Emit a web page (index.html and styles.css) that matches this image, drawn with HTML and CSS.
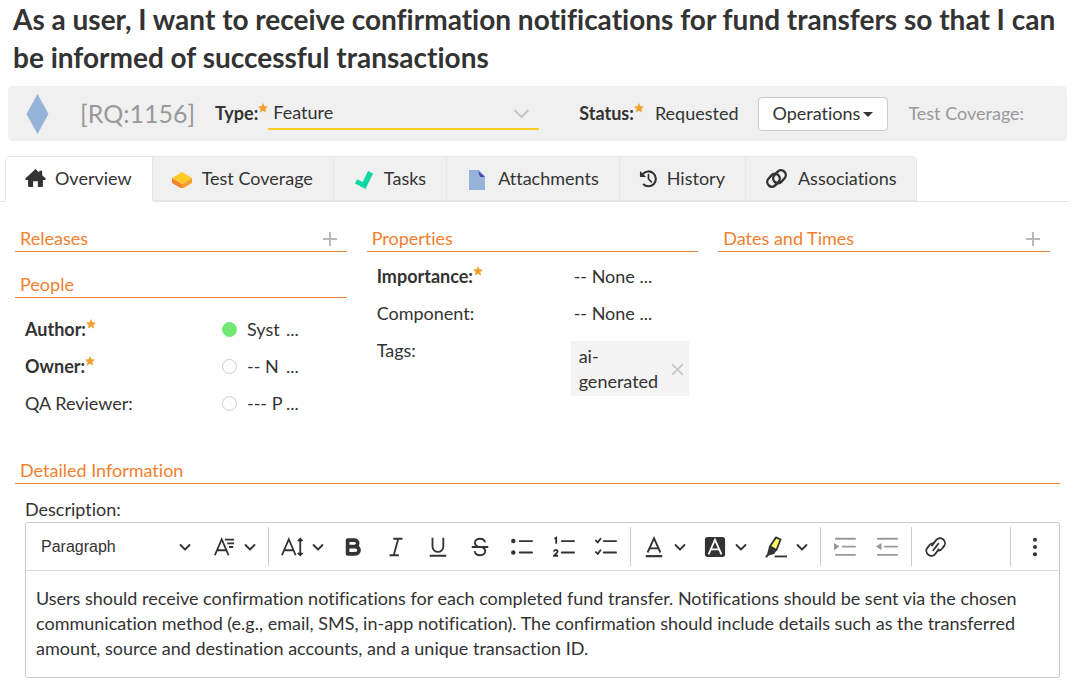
FILE: index.html
```html
<!DOCTYPE html>
<html lang="en">
<head>
    <meta charset="UTF-8">
    <meta name="viewport" content="width=device-width, initial-scale=1.0">
    <title>[RQ:1156] Requirement Details</title>
    <link rel="stylesheet" href="styles.css">
</head>
<body>
    <!-- shared icons -->
    <svg class="sprite" aria-hidden="true">
        <symbol id="star" viewBox="0 0 10 10"><path d="M5 0l1.500 3.200 3.500.4-2.600 2.400.7 3.600L5 7.800 1.900 9.600l.7-3.600L0 3.600l3.500-.4z" fill="#f0a030"/></symbol>
        <symbol id="chevron" viewBox="0 0 12 12"><path d="M1.500 4L6 8.500 10.500 4" fill="none" stroke="currentColor" stroke-width="1.800" stroke-linecap="round" stroke-linejoin="round"/></symbol>
        <symbol id="plus" viewBox="0 0 16 16"><path d="M8 1v14M1 8h14" fill="none" stroke="#b9b9b9" stroke-width="2"/></symbol>
    </svg>

    <h1>As a user, I want to receive confirmation notifications for fund transfers so that I can be informed of successful transactions</h1>

    <header class="summary">
        <svg class="diamond" viewBox="0 0 22 40" aria-hidden="true"><path d="M11 0l11 20-11 20L0 20z" fill="#96b3d9"/></svg>
        <span class="artifact-id">[RQ:1156]</span>
        <label class="required" for="type">Type:<svg class="star"><use href="#star"/></svg></label>
        <div class="type-select">
            <select id="type">
                <option>Feature</option>
            </select>
            <svg class="type-arrow" viewBox="0 0 16 10" aria-hidden="true"><path d="M1 1l7 7 7-7" fill="none" stroke="#c6c6c6" stroke-width="2"/></svg>
        </div>
        <div class="status">
            <span class="required">Status:<svg class="star"><use href="#star"/></svg></span>
            <span>Requested</span>
        </div>
        <button type="button" class="operations">Operations<span class="caret"></span></button>
        <span class="coverage">Test Coverage:</span>
    </header>

    <nav class="tabs">
        <a href="#overview" class="tab active">
            <svg width="21" height="19" viewBox="0 0 22 20"><path d="M11 0L0 10.300l1 1.200h2.200V18q0 1 1 1h4.300v-6h5v6h4.300q1 0 1-1v-6.500H21l1-1.200-4-3.800V1.800h-3v2z" fill="#333"/></svg>
            Overview
        </a>
        <a href="#coverage" class="tab">
            <svg width="21" height="18" viewBox="0 -1 21 18"><path d="M10 1l10 6-10 6L0 7z" fill="#fdcb26"/><path d="M0 7l10 6v5L0 12z" fill="#f1852f"/><path d="M20 7l-10 6v5l10-6z" fill="#f5a02b"/></svg>
            Test Coverage
        </a>
        <a href="#tasks" class="tab">
            <svg width="22" height="20" viewBox="-2 -2 22 20"><path d="M13 0l5 2.500L10.500 18 0 12.500l2.200-4.300 5.500 2.800z" fill="#0cd8a5"/></svg>
            Tasks
        </a>
        <a href="#attachments" class="tab">
            <svg width="23" height="22" viewBox="-2 -2 23 22"><path d="M1 0h10l6 6v14H1z" fill="#96b3d9"/><path d="M10 1l7 6h-5z" fill="#4845ac"/></svg>
            Attachments
        </a>
        <a href="#history" class="tab">
            <svg width="19" height="20" viewBox="0 0 20 20"><path d="M3.800 5a7.800 7.800 0 1 1 .5 10.200" fill="none" stroke="#333" stroke-width="2.200"/><path d="M1 1.500v6.500h6.500z" fill="#333"/><path d="M10 5.500V10l3 3" fill="none" stroke="#333" stroke-width="1.800" stroke-linecap="round"/></svg>
            History
        </a>
        <a href="#associations" class="tab">
            <svg width="24" height="20" viewBox="0 0 24 20"><g fill="none" stroke="#333" stroke-width="2.400"><rect x="7.500" y="3" width="14" height="9.500" rx="4.700" transform="rotate(-48 14.500 7.750)"/><rect x="1.500" y="6.500" width="14" height="9.500" rx="4.700" transform="rotate(-48 8.500 11.250)"/></g></svg>
            Associations
        </a>
    </nav>

    <main>
        <div class="columns">
            <div>
                <section>
                    <h2>Releases <button type="button" class="expand" aria-label="Expand Releases"><svg><use href="#plus"/></svg></button></h2>
                </section>
                <section class="people">
                    <h2>People</h2>
                    <dl>
                        <div class="field">
                            <dt class="required">Author:<svg class="star"><use href="#star"/></svg></dt>
                            <dd><span class="dot online"></span><span class="name">Syst</span>...</dd>
                        </div>
                        <div class="field">
                            <dt class="required">Owner:<svg class="star"><use href="#star"/></svg></dt>
                            <dd><span class="dot"></span><span class="name">-- N</span>...</dd>
                        </div>
                        <div class="field">
                            <dt>QA Reviewer:</dt>
                            <dd><span class="dot"></span><span class="name">--- P</span>...</dd>
                        </div>
                    </dl>
                </section>
            </div>

            <section>
                <h2>Properties</h2>
                <dl>
                    <div class="field">
                        <dt class="required">Importance:<svg class="star"><use href="#star"/></svg></dt>
                        <dd>-- None ...</dd>
                    </div>
                    <div class="field">
                        <dt>Component:</dt>
                        <dd>-- None ...</dd>
                    </div>
                    <div class="field">
                        <dt>Tags:</dt>
                        <dd>
                            <span class="tag">ai-generated
                                <button type="button" aria-label="Remove tag"><svg viewBox="0 0 12 12"><path d="M1 1l10 10M11 1L1 11" stroke="#c6c6c6" stroke-width="1.500"/></svg></button>
                            </span>
                        </dd>
                    </div>
                </dl>
            </section>

            <section>
                <h2>Dates and Times <button type="button" class="expand" aria-label="Expand Dates and Times"><svg><use href="#plus"/></svg></button></h2>
            </section>
        </div>

        <section class="details">
            <h2>Detailed Information</h2>
            <p class="description-label" id="description">Description:</p>
            <div class="editor">
                <div class="toolbar" role="toolbar">
                    <div class="heading-select">
                        <select aria-label="Heading">
                            <option>Paragraph</option>
                        </select>
                        <svg class="chevron"><use href="#chevron"/></svg>
                    </div>
                    <button type="button" class="dropdown" aria-label="Font Family">
                        <svg class="icon" viewBox="0 0 24 24"><path d="M2 21L9.500 3.500 17 21M4.500 15.500h10" fill="none" stroke="currentColor" stroke-width="2"/><path d="M13 4h10M15.500 8H23M17.500 12H22" stroke="currentColor" stroke-width="2"/></svg>
                        <svg class="chevron"><use href="#chevron"/></svg>
                    </button>
                    <span class="separator"></span>
                    <button type="button" class="dropdown" aria-label="Font Size">
                        <svg class="icon" viewBox="0 0 24 24"><path d="M1 21L8.500 3.500 16 21M3.500 15.500h10M21 4v16M18.500 5.500L21 3l2.500 2.500M18.500 18.500L21 21l2.500-2.500" fill="none" stroke="currentColor" stroke-width="2"/></svg>
                        <svg class="chevron"><use href="#chevron"/></svg>
                    </button>
                    <button type="button" aria-label="Bold">
                        <svg class="icon" viewBox="0 0 24 24"><path d="M5 4.500h7.500a3.500 3.500 0 0 1 0 7H5zM5 11.500h8.500a4 4 0 0 1 0 8H5z" fill="none" stroke="currentColor" stroke-width="4" stroke-linejoin="round"/></svg>
                    </button>
                    <button type="button" aria-label="Italic">
                        <svg class="icon" viewBox="0 0 24 24"><path d="M9 3h10M5 21h10M14.500 3l-5 18" fill="none" stroke="currentColor" stroke-width="2"/></svg>
                    </button>
                    <button type="button" aria-label="Underline">
                        <svg class="icon" viewBox="0 0 24 24"><path d="M6 2v9.500a5.900 5.900 0 0 0 11.800 0V2M3 21.500h18" fill="none" stroke="currentColor" stroke-width="2"/></svg>
                    </button>
                    <button type="button" aria-label="Strikethrough">
                        <svg class="icon" viewBox="0 0 24 24"><path d="M17.500 7C17 4.500 15 3 12 3S6.500 4.700 6.500 7.300c0 1.800 1 3.200 3 4M14.500 12.500c2.200.8 3.200 2 3.200 3.900 0 2.900-2.200 4.600-5.700 4.600S6.500 19.300 6.200 16.500M3 12h18" fill="none" stroke="currentColor" stroke-width="2"/></svg>
                    </button>
                    <button type="button" aria-label="Bulleted List">
                        <svg class="icon" viewBox="0 0 24 24"><path d="M9.500 5.500H23M9.500 18H23" stroke="currentColor" stroke-width="2" stroke-linecap="round"/><circle cx="2.500" cy="5.500" r="2.400" fill="currentColor"/><circle cx="2.500" cy="18" r="2.400" fill="currentColor"/></svg>
                    </button>
                    <button type="button" aria-label="Numbered List">
                        <svg class="icon" viewBox="0 0 24 24"><path d="M9.500 5.500H23M9.500 18H23" stroke="currentColor" stroke-width="2" stroke-linecap="round"/><path d="M1.500 3L3.500 2v6.500M1 17c.2-2.500 4-2.400 4 0 0 1.500-2.300 2.500-3.800 4.500h4.300" fill="none" stroke="currentColor" stroke-width="2"/></svg>
                    </button>
                    <button type="button" aria-label="To-do List">
                        <svg class="icon" viewBox="0 0 24 24"><path d="M9.500 5.500H23M9.500 18H23M1 5l2 2 3-4M1 17.500l2 2 3-4" fill="none" stroke="currentColor" stroke-width="2" stroke-linecap="round"/></svg>
                    </button>
                    <span class="separator"></span>
                    <button type="button" class="dropdown" aria-label="Font Color">
                        <svg class="icon" viewBox="0 0 24 24"><path d="M5 18L12 2.500 19 18M7.500 13.500h9" fill="none" stroke="currentColor" stroke-width="2"/><path d="M3 22h18" stroke="currentColor" stroke-width="2.400"/></svg>
                        <svg class="chevron"><use href="#chevron"/></svg>
                    </button>
                    <button type="button" class="dropdown" aria-label="Font Background Color">
                        <svg class="icon" viewBox="0 0 24 24"><rect x="1" y="1" width="22" height="22" rx="3" fill="currentColor"/><path d="M5 20l7-16 7 16M7.500 14.500h9" fill="none" stroke="#fff" stroke-width="2"/></svg>
                        <svg class="chevron"><use href="#chevron"/></svg>
                    </button>
                    <button type="button" class="dropdown" aria-label="Highlight">
                        <svg class="icon" viewBox="0 0 24 24"><path d="M12 1.500l5 2.300-4.500 11.500-7-4z" fill="#fdfa66" stroke="currentColor" stroke-width="2" stroke-linejoin="round"/><path d="M4.500 10.500l8.500 4.500-3 4.500-5.500 1.500L2 23.500l-2-.3L2.500 19z" fill="currentColor"/><path d="M10.500 22.300H24" stroke="currentColor" stroke-width="2"/></svg>
                        <svg class="chevron"><use href="#chevron"/></svg>
                    </button>
                    <span class="separator"></span>
                    <button type="button" disabled aria-label="Increase Indent">
                        <svg class="icon" viewBox="0 0 24 24"><path d="M2 3h21M9.500 11.500H23M2 20.500h21" stroke="currentColor" stroke-width="2" stroke-linecap="round"/><path d="M0 7.500l6 4-6 4z" fill="currentColor"/></svg>
                    </button>
                    <button type="button" disabled aria-label="Decrease Indent">
                        <svg class="icon" viewBox="0 0 24 24"><path d="M2 3h21M9.500 11.500H23M2 20.500h21" stroke="currentColor" stroke-width="2" stroke-linecap="round"/><path d="M6 7.500l-6 4 6 4z" fill="currentColor"/></svg>
                    </button>
                    <span class="separator"></span>
                    <button type="button" aria-label="Link">
                        <svg class="icon" viewBox="0 0 24 24"><g fill="none" stroke="currentColor" stroke-width="2" stroke-linecap="round"><path d="M7.500 10.500l4.800-6.200a5.400 5.400 0 0 1 8.600 6.500l-2.600 3.400a4.500 4.500 0 0 1-4 1.700"/><path d="M15 14.500l-4 5.200a5.400 5.400 0 0 1-8.600-6.500l2.600-3.400a4.500 4.500 0 0 1 4.500-1.700"/><path d="M14.500 8.500L9 15.500"/></g></svg>
                    </button>
                    <div class="more">
                        <span class="separator"></span>
                        <button type="button" aria-label="Show more items">
                            <svg class="icon" viewBox="0 0 24 24" fill="currentColor"><circle cx="12" cy="4" r="2.200"/><circle cx="12" cy="12" r="2.200"/><circle cx="12" cy="20" r="2.200"/></svg>
                        </button>
                    </div>
                </div>
                <div class="content" contenteditable="true" role="textbox" aria-labelledby="description">
                    <p>Users should receive confirmation notifications for each completed fund transfer. Notifications should be sent via the chosen communication method (e.g., email, SMS, in-app notification). The confirmation should include details such as the transferred amount, source and destination accounts, and a unique transaction ID.</p>
                </div>
            </div>
        </section>
    </main>
</body>
</html>
```
FILE: styles.css
```css
:root {
    --text: #333;
    --muted: #999;
    --orange: #f1802f;
    --yellow: #fdcb26;
    --panel: #f0f0f0;
    --line: #e6e6e6;
}

* {
    box-sizing: border-box;
}

body {
    margin: 0;
    font-family: Lato, sans-serif;
    font-size: 18px;
    line-height: 25px;
    font-variant-ligatures: none;
    color: var(--text);
    background: #fff;
}

button, select {
    font: inherit;
    font-variant-ligatures: none;
    color: inherit;
    border: none;
    background: none;
    padding: 0;
    cursor: pointer;
}

select {
    appearance: none;
    width: 100%;
}

.sprite {
    position: absolute;
    width: 0;
    height: 0;
}

h1 {
    margin: 0 8px 10px 13px;
    font-size: 28px;
    line-height: 38px;
}

/* summary bar */
.summary {
    display: flex;
    align-items: center;
    min-height: 55px;
    margin: 0 7px 0 8px;
    padding: 0 18px;
    background: var(--panel);
    border-radius: 5px;
    white-space: nowrap;
}

.diamond {
    width: 23px;
    height: 40px;
}

.artifact-id {
    margin: 0 20px 0 31px;
    font-size: 25px;
    color: var(--muted);
}

.required {
    font-weight: bold;
}

.star {
    width: 10px;
    height: 10px;
    vertical-align: 7px;
}

.type-select {
    position: relative;
    width: 271px;
    border-bottom: 2px solid var(--yellow);
}

.type-select select {
    height: 30px;
    padding: 0 30px 0 5px;
}

.type-arrow {
    position: absolute;
    right: 9px;
    top: 11px;
    width: 17px;
    height: 10px;
    pointer-events: none;
}

.status {
    display: flex;
    gap: 11px;
    margin: 0 19px 0 40px;
}

.operations {
    height: 34px;
    padding: 0 14px;
    border: 1px solid #ccc;
    border-radius: 4px;
    background: #fff;
}

.caret {
    display: inline-block;
    margin-left: 3px;
    vertical-align: 3px;
    border: 5px solid transparent;
    border-top-color: var(--text);
    border-bottom: none;
}

.coverage {
    margin-left: 20px;
    color: var(--muted);
}

/* tabs */
.tabs {
    display: flex;
    margin: 15px 5px 0 0;
    padding-left: 5px;
    box-shadow: inset 0 -1px var(--line);
}

.tab {
    display: flex;
    align-items: center;
    gap: 9px;
    height: 46px;
    padding: 0 20px 0 19px;
    background: var(--panel);
    border-top: 1px solid var(--line);
    border-right: 1px solid var(--line);
    border-bottom: 2px solid var(--line);
    color: inherit;
    text-decoration: none;
    white-space: nowrap;
}

.tab.active {
    background: #fff;
    border-left: 1px solid var(--line);
    border-bottom-color: #fff;
    border-radius: 5px 0 0 0;
}

.tab:last-child {
    border-radius: 0 5px 0 0;
}

/* field sections */
main {
    padding: 24px 14px 12px 15px;
}

.columns {
    display: grid;
    grid-template-columns: repeat(3, 1fr);
    gap: 20px;
    min-height: 232px;
    padding-right: 10px;
}

h2 {
    display: flex;
    justify-content: space-between;
    margin: 0;
    padding: 0 9px 0 5px;
    border-bottom: 1px solid var(--orange);
    font-size: 18px;
    font-weight: normal;
    line-height: 25px;
    color: var(--orange);
}

.expand, .expand svg {
    width: 16px;
    height: 16px;
}

.expand {
    display: flex;
    align-self: center;
}

.people {
    margin-top: 20px;
}

.people dl {
    margin-top: 13px;
}

dl {
    margin: 6px 0 0;
}

.field {
    display: grid;
    grid-template-columns: 197px 1fr;
    min-height: 37px;
    padding: 6px 9px 6px 10px;
}

dd {
    display: flex;
    align-items: center;
    align-self: start;
    margin: 0;
}

.dot {
    width: 15px;
    height: 15px;
    margin-right: 10px;
    border: 1px solid #ccc;
    border-radius: 50%;
}

.dot.online {
    background: #72e872;
    border-color: #72e872;
}

.name {
    width: 39px;
    white-space: nowrap;
}

.tag {
    display: flex;
    align-items: center;
    justify-content: space-between;
    width: 118px;
    margin: 3px 0 0 -3px;
    padding: 3px 5px 2px 8px;
    background: #f4f4f4;
}

.tag svg {
    display: block;
    width: 13px;
    height: 13px;
}

/* description editor */
.description-label {
    margin: 13px 0 0 10px;
}

.editor {
    margin-left: 10px;
    border: 1px solid #ccc;
    border-radius: 2px;
}

.toolbar {
    display: flex;
    flex-wrap: wrap;
    align-items: center;
    padding: 0 3px;
    border-bottom: 1px solid #d8d8d8;
}

.toolbar button {
    display: flex;
    align-items: center;
    justify-content: center;
    width: 42px;
    height: 47px;
}

.toolbar .dropdown {
    gap: 9px;
    width: 61px;
}

.toolbar button:disabled {
    color: #999;
    cursor: default;
}

.icon {
    flex: none;
    width: 22px;
    height: 22px;
}

.chevron {
    flex: none;
    width: 12px;
    height: 12px;
}

.heading-select {
    display: flex;
    align-items: center;
    width: 175px;
    padding: 0 13px 0 12px;
    font-family: "Liberation Sans", sans-serif;
    font-size: 16px;
}

.heading-select .chevron {
    pointer-events: none;
}

.separator {
    width: 1px;
    height: 39px;
    margin: 0 3px;
    background: #ccc;
}

.more {
    display: flex;
    align-items: center;
    margin-left: auto;
}

.content {
    padding: 15px 10px 16px;
}

.content p {
    margin: 0;
}
```
